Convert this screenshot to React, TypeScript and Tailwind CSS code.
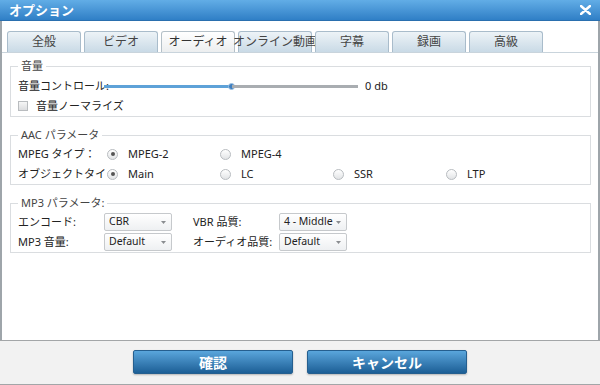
import { ReactNode } from "react";

const tabs = ["全般", "ビデオ", "オーディオ", "オンライン動画", "字幕", "録画", "高級"];

function Group({ title, children, pt }: { title: string; children: ReactNode; pt: string }) {
  return (
    <fieldset className={`ml-[8px] mr-[7px] border border-[#dadde0] pl-[7px] pr-[7px] ${pt}`}>
      <legend className="px-[3px] text-[11px] leading-[14px] text-[#444]">{title}</legend>
      {children}
    </fieldset>
  );
}

function Radio({ label, checked }: { label: string; checked?: boolean }) {
  return (
    <div className="flex w-[113px] items-center">
      <span className="ml-[1px] flex h-[11px] w-[11px] items-center justify-center rounded-full border border-[#b8bcc0] bg-gradient-to-b from-[#ffffff] to-[#e2e4e6]">
        {checked && <span className="h-[4px] w-[4px] rounded-full bg-[#555]" />}
      </span>
      <span className="ml-[10px]">{label}</span>
    </div>
  );
}

function Select({ value }: { value: string }) {
  return (
    <div className="flex h-[18px] w-[68px] items-center justify-between whitespace-nowrap rounded-[2px] border border-[#c6c9cc] bg-gradient-to-b from-[#ffffff] to-[#eef0f2] pl-[4px] pr-[5px]">
      <span className="text-[10.5px]">{value}</span>
      <svg width="5" height="3" viewBox="0 0 5 3" className="shrink-0">
        <path d="M0 0 H5 L2.5 3 Z" fill="#8a8d90" />
      </svg>
    </div>
  );
}

export default function App() {
  return (
    <div
      className="flex h-[385px] w-[600px] flex-col bg-white text-[11px] text-[#222]"
      style={{ fontFamily: '"Noto Sans", "Noto Sans CJK JP", sans-serif' }}
    >
      {/* title bar */}
      <div className="flex h-[21px] shrink-0 items-center justify-between border-b border-[#2a6fae] bg-gradient-to-b from-[#62ade6] to-[#2f7fc6] pl-[9px] pr-[9px]">
        <span className="text-[13px] font-bold leading-none text-white">オプション</span>
        <svg width="11" height="10" viewBox="0 0 11 10">
          <path d="M1 1 L10 9 M10 1 L1 9" stroke="white" strokeWidth="2.4" strokeLinecap="round" />
        </svg>
      </div>

      <div className="flex flex-1 flex-col border-x-2 border-[#9ea5aa]">
        {/* tabs */}
        <div className="flex gap-[3px] border-b border-[#c9d4dc] pl-[5px] pt-[10px]">
          {tabs.map((t) => (
            <div
              key={t}
              className={
                t === "オーディオ"
                  ? "flex h-[21px] w-[74px] items-center justify-center whitespace-nowrap rounded-t-[3px] border border-b-0 border-[#b4c0c8] bg-gradient-to-b from-[#ffffff] to-[#eceeef] text-[12px] text-[#333]"
                  : "flex h-[21px] w-[74px] items-center justify-center whitespace-nowrap rounded-t-[3px] border border-b-0 border-[#a9bccb] bg-gradient-to-b from-[#edf3f7] to-[#c9dae6] text-[12px] text-[#444]"
              }
            >
              {t}
            </div>
          ))}
        </div>

        <div className="mt-[6px] flex flex-col gap-[11px]">
          <Group title="音量" pt="pt-[3px]">
            <div className="flex h-[20px] items-center">
              <span className="w-[86px] shrink-0 whitespace-nowrap">音量コントロール:</span>
              <div className="flex h-[3px] w-[254px] items-center">
                <div className="h-[3px] w-1/2 bg-[#5ea2d8]" />
                <div className="-mx-[3px] h-[7px] w-[7px] shrink-0 rounded-full border border-[#9dc3e4] bg-[#3f7fbf]" />
                <div className="h-[3px] flex-1 bg-[#a9adb1]" />
              </div>
              <span className="ml-[7px]">0 db</span>
            </div>
            <div className="flex h-[20px] items-center">
              <span className="h-[10px] w-[10px] border border-[#b9bcbf] bg-gradient-to-b from-[#f6f6f6] to-[#dcdddf]" />
              <span className="ml-[8px]">音量ノーマライズ</span>
            </div>
          </Group>

          <Group title="AAC パラメータ" pt="pt-[2px]">
            <div className="flex h-[20px] items-center">
              <span className="w-[88px] shrink-0 overflow-hidden whitespace-nowrap">MPEG タイプ：</span>
              <Radio label="MPEG-2" checked />
              <Radio label="MPEG-4" />
            </div>
            <div className="flex h-[20px] items-center">
              <span className="w-[88px] shrink-0 overflow-hidden whitespace-nowrap">オブジェクトタイプ：</span>
              <Radio label="Main" checked />
              <Radio label="LC" />
              <Radio label="SSR" />
              <Radio label="LTP" />
            </div>
          </Group>

          <Group title="MP3 パラメータ:" pt="pt-[2px]">
            <div className="flex h-[20px] items-center">
              <span className="w-[86px] shrink-0">エンコード:</span>
              <Select value="CBR" />
              <span className="ml-[21px] w-[86px] shrink-0">VBR 品質:</span>
              <Select value="4 - Middle" />
            </div>
            <div className="flex h-[20px] items-center">
              <span className="w-[86px] shrink-0">MP3 音量:</span>
              <Select value="Default" />
              <span className="ml-[21px] w-[86px] shrink-0">オーディオ品質:</span>
              <Select value="Default" />
            </div>
          </Group>
        </div>
      </div>

      {/* footer */}
      <div className="flex h-[45px] shrink-0 justify-center gap-[14px] border-y border-[#a3a6a8] bg-[#f2f2f2] pt-[9px]">
        <button className="h-[24px] w-[160px] rounded-[2px] border border-[#255f8f] bg-gradient-to-b from-[#5aa6dc] to-[#1c5f96] text-[14px] font-bold text-white shadow-[0_1px_2px_rgba(0,0,0,0.25)]">
          確認
        </button>
        <button className="h-[24px] w-[160px] rounded-[2px] border border-[#255f8f] bg-gradient-to-b from-[#5aa6dc] to-[#1c5f96] text-[14px] font-bold text-white shadow-[0_1px_2px_rgba(0,0,0,0.25)]">
          キャンセル
        </button>
      </div>
    </div>
  );
}
